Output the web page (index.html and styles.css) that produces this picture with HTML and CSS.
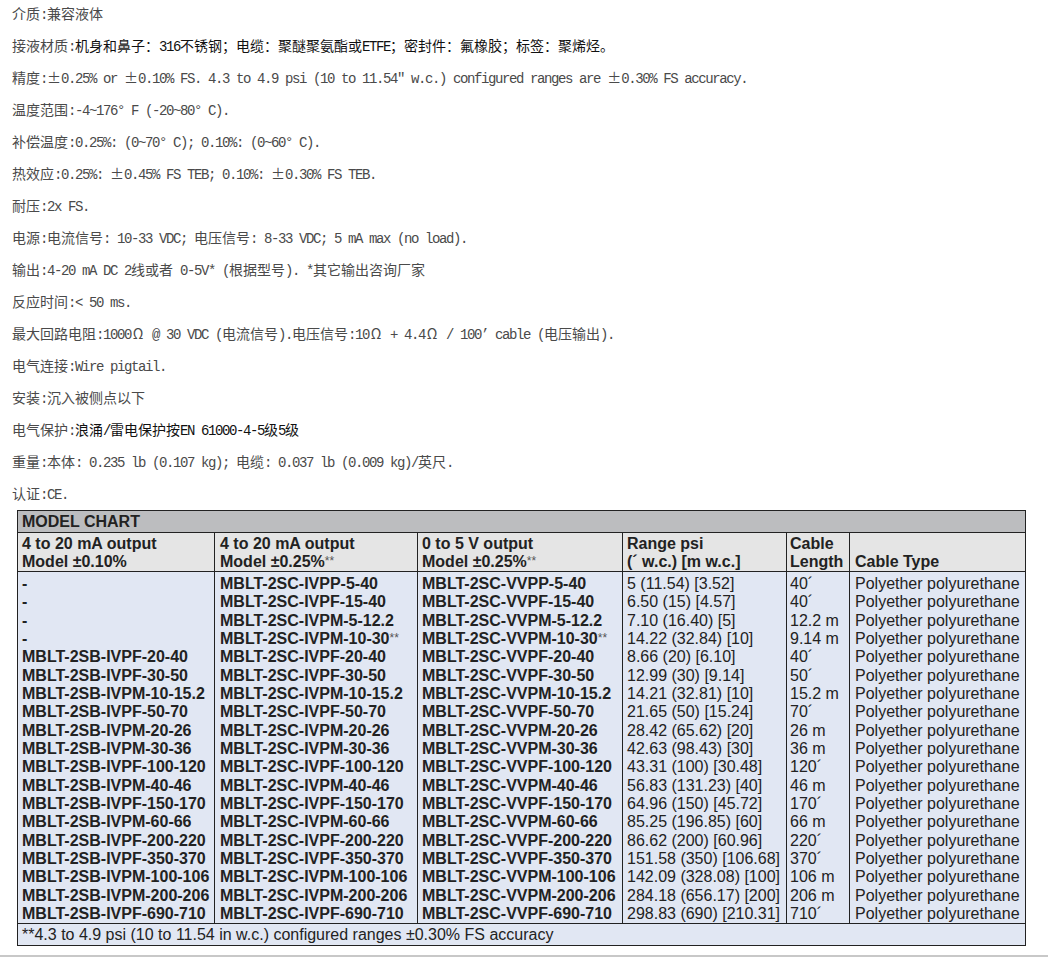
FILE: index.html
```html
<!DOCTYPE html>
<html lang="zh-CN">
<head>
<meta charset="utf-8">
<title>MBLT</title>
<link rel="stylesheet" href="styles.css">
</head>
<body>
<main class="page">
<section class="specs">
<p>介质<b>:</b>兼容液体</p>
<p>接液材质<b>:</b><span class="dark">机身和鼻子：<b>316</b>不锈钢；电缆：聚醚聚氨酯或<b>ETFE</b>；密封件：氟橡胶；标签：聚烯烃。</span></p>
<p>精度<b>:</b>±<b>0.25% or </b>±<b>0.10% FS. 4.3 to 4.9 psi (10 to 11.54″ w.c.) configured ranges are </b>±<b>0.30% FS accuracy.</b></p>
<p>温度范围<b>:-4~176° F (-20~80° C).</b></p>
<p>补偿温度<b>:0.25%: (0~70° C); 0.10%: (0~60° C).</b></p>
<p>热效应<b>:0.25%: </b>±<b>0.45% FS TEB; 0.10%: </b>±<b>0.30% FS TEB.</b></p>
<p>耐压<b>:2x FS.</b></p>
<p>电源<b>:</b>电流信号<b>: 10-33 VDC; </b>电压信号<b>: 8-33 VDC; 5 mA max (no load).</b></p>
<p>输出<b>:4-20 mA DC 2</b>线或者<b> 0-5V* (</b>根据型号<b>). *</b>其它输出咨询厂家</p>
<p>反应时间<b>:&lt; 50 ms.</b></p>
<p>最大回路电阻<b>:1000</b><span class="ohm">Ω</span><b> @ 30 VDC (</b>电流信号<b>).</b>电压信号<b>:10</b><span class="ohm">Ω</span><b> + 4.4</b><span class="ohm">Ω</span><b> / 100’ cable (</b>电压输出<b>).</b></p>
<p>电气连接<b>:Wire pigtail.</b></p>
<p>安装<b>:</b>沉入被侧点以下</p>
<p>电气保护<b>:</b><span class="dark">浪涌<b>/</b>雷电保护按<b>EN 61000-4-5</b>级<b>5</b>级</span></p>
<p>重量<b>:</b>本体<b>: 0.235 lb (0.107 kg); </b>电缆<b>: 0.037 lb (0.009 kg)/</b>英尺<b>.</b></p>
<p>认证<b>:CE.</b></p>
</section>

<section class="chart">
<div class="title">MODEL CHART</div>

<div class="head first"><span>4 to 20 mA output<br>Model ±0.10%</span></div>
<div class="head"><span>4 to 20 mA output<br>Model ±0.25%<sup>**</sup></span></div>
<div class="head tight"><span>0 to 5 V output<br>Model ±0.25%<sup>**</sup></span></div>
<div class="head tight"><span>Range psi<br>(´ w.c.) [m w.c.]</span></div>
<div class="head tighter"><span>Cable<br>Length</span></div>
<div class="head"><span>Cable Type</span></div>

<div class="col first model">-<br>-<br>-<br>-<br>MBLT-2SB-IVPF-20-40<br>MBLT-2SB-IVPF-30-50<br>MBLT-2SB-IVPM-10-15.2<br>MBLT-2SB-IVPF-50-70<br>MBLT-2SB-IVPM-20-26<br>MBLT-2SB-IVPM-30-36<br>MBLT-2SB-IVPF-100-120<br>MBLT-2SB-IVPM-40-46<br>MBLT-2SB-IVPF-150-170<br>MBLT-2SB-IVPM-60-66<br>MBLT-2SB-IVPF-200-220<br>MBLT-2SB-IVPF-350-370<br>MBLT-2SB-IVPM-100-106<br>MBLT-2SB-IVPM-200-206<br>MBLT-2SB-IVPF-690-710</div>
<div class="col model">MBLT-2SC-IVPP-5-40<br>MBLT-2SC-IVPF-15-40<br>MBLT-2SC-IVPM-5-12.2<br>MBLT-2SC-IVPM-10-30<sup>**</sup><br>MBLT-2SC-IVPF-20-40<br>MBLT-2SC-IVPF-30-50<br>MBLT-2SC-IVPM-10-15.2<br>MBLT-2SC-IVPF-50-70<br>MBLT-2SC-IVPM-20-26<br>MBLT-2SC-IVPM-30-36<br>MBLT-2SC-IVPF-100-120<br>MBLT-2SC-IVPM-40-46<br>MBLT-2SC-IVPF-150-170<br>MBLT-2SC-IVPM-60-66<br>MBLT-2SC-IVPF-200-220<br>MBLT-2SC-IVPF-350-370<br>MBLT-2SC-IVPM-100-106<br>MBLT-2SC-IVPM-200-206<br>MBLT-2SC-IVPF-690-710</div>
<div class="col tight model">MBLT-2SC-VVPP-5-40<br>MBLT-2SC-VVPF-15-40<br>MBLT-2SC-VVPM-5-12.2<br>MBLT-2SC-VVPM-10-30<sup>**</sup><br>MBLT-2SC-VVPF-20-40<br>MBLT-2SC-VVPF-30-50<br>MBLT-2SC-VVPM-10-15.2<br>MBLT-2SC-VVPF-50-70<br>MBLT-2SC-VVPM-20-26<br>MBLT-2SC-VVPM-30-36<br>MBLT-2SC-VVPF-100-120<br>MBLT-2SC-VVPM-40-46<br>MBLT-2SC-VVPF-150-170<br>MBLT-2SC-VVPM-60-66<br>MBLT-2SC-VVPF-200-220<br>MBLT-2SC-VVPF-350-370<br>MBLT-2SC-VVPM-100-106<br>MBLT-2SC-VVPM-200-206<br>MBLT-2SC-VVPF-690-710</div>
<div class="col tight">5 (11.54) [3.52]<br>6.50 (15) [4.57]<br>7.10 (16.40) [5]<br>14.22 (32.84) [10]<br>8.66 (20) [6.10]<br>12.99 (30) [9.14]<br>14.21 (32.81) [10]<br>21.65 (50) [15.24]<br>28.42 (65.62) [20]<br>42.63 (98.43) [30]<br>43.31 (100) [30.48]<br>56.83 (131.23) [40]<br>64.96 (150) [45.72]<br>85.25 (196.85) [60]<br>86.62 (200) [60.96]<br>151.58 (350) [106.68]<br>142.09 (328.08) [100]<br>284.18 (656.17) [200]<br>298.83 (690) [210.31]</div>
<div class="col tighter">40´<br>40´<br>12.2 m<br>9.14 m<br>40´<br>50´<br>15.2 m<br>70´<br>26 m<br>36 m<br>120´<br>46 m<br>170´<br>66 m<br>220´<br>370´<br>106 m<br>206 m<br>710´</div>
<div class="col">Polyether polyurethane<br>Polyether polyurethane<br>Polyether polyurethane<br>Polyether polyurethane<br>Polyether polyurethane<br>Polyether polyurethane<br>Polyether polyurethane<br>Polyether polyurethane<br>Polyether polyurethane<br>Polyether polyurethane<br>Polyether polyurethane<br>Polyether polyurethane<br>Polyether polyurethane<br>Polyether polyurethane<br>Polyether polyurethane<br>Polyether polyurethane<br>Polyether polyurethane<br>Polyether polyurethane<br>Polyether polyurethane</div>

<div class="note">**4.3 to 4.9 psi (10 to 11.54 in w.c.) configured ranges ±0.30% FS accuracy</div>
</section>
</main>
<div class="bottom-rule"></div>
</body>
</html>
```

FILE: styles.css
```css
html, body {
  margin: 0;
  padding: 0;
  background: #fff;
}

.page {
  height: 955px;
  padding-left: 12px;
  box-sizing: border-box;
  overflow: hidden;
}

.bottom-rule {
  height: 2px;
  background: #c8c8c8;
}

.specs p {
  margin: 0 0 4px;
  height: 28px;
  line-height: 26px;
  font-family: "Noto Sans CJK SC", sans-serif;
  font-size: 14px;
  font-weight: 400;
  color: #4a4a4a;
  white-space: nowrap;
}

.specs p:last-child {
  margin-bottom: 2px;
}

.specs b {
  font-family: "Liberation Mono", monospace;
  font-size: 14px;
  letter-spacing: -1.4px;
  font-weight: 400;
}

.specs .ohm {
  display: inline-block;
  width: 14px;
  text-align: center;
}

.specs .dark {
  color: #111;
}

.chart {
  margin-left: 5px;
  width: 1009px;
  box-sizing: border-box;
  display: grid;
  grid-template-columns: 196px 203px 205px 164px 63px 176px;
  border: 1px solid #222;
  font-family: "Liberation Sans", Arial, sans-serif;
  font-size: 16px;
  color: #222;
}

.title {
  grid-column: 1 / -1;
  height: 21px;
  line-height: 21px;
  padding-left: 4px;
  background: #bcbdbf;
  font-weight: 700;
}

.head {
  height: 39px;
  padding: 1px 0 0 5px;
  box-sizing: border-box;
  line-height: 18px;
  background: #e5e5e5;
  border-top: 1px solid #222;
  border-left: 1px solid #222;
  font-weight: 700;
  display: flex;
  align-items: flex-end;
  white-space: nowrap;
}

sup {
  font-size: 12px;
  line-height: 0;
  vertical-align: 2px;
  font-weight: 400;
  color: #555;
}

.col {
  padding: 3px 0 0 5px;
  box-sizing: border-box;
  height: 352px;
  line-height: 18.33px;
  background: #e1e7f3;
  border-top: 1px solid #222;
  border-left: 1px solid #222;
  white-space: nowrap;
}

.chart .first {
  border-left: 0;
  padding-left: 4px;
}

.chart .tight {
  padding-left: 4px;
}

.chart .tighter {
  padding-left: 3px;
}

.model {
  font-weight: 700;
}

.note {
  grid-column: 1 / -1;
  height: 22px;
  line-height: 21px;
  padding-left: 4px;
  box-sizing: border-box;
  background: #e1e7f3;
  border-top: 1px solid #222;
}
```
